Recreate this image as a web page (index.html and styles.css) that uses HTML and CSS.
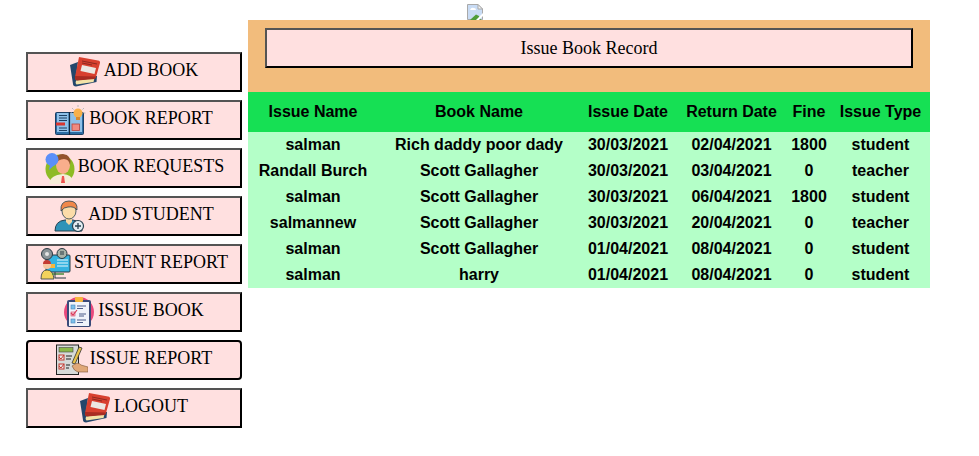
FILE: index.html
```html
<!DOCTYPE html>
<html lang="en">
<head>
    <meta charset="UTF-8">
    <meta name="viewport" content="width=device-width, initial-scale=1.0">
    <title>Issue Book Record</title>
    <link rel="stylesheet" href="styles.css">
</head>
<body>
    <svg class="sprites" width="0" height="0">
        <symbol id="book-icon" viewBox="0 0 32 32">
            <path d="M0 9 8 6 6 20 27 20 26.500 26 6 30.500Q3 30 3 28Z" fill="#24466b"/>
            <path d="M6 24.500 24.500 22 23.500 26 6.500 28.500Q5 26.500 6 24.500Z" fill="#f3e3a8"/>
            <path d="M9 1 28 4.500Q30.500 5 30 7L26 21Q25 23 23 22.500L7 24Q4.500 24 5 21Z" fill="#d8402f"/>
            <path d="M5 20 26 20.500 25 23 7 24.500Q4.500 24 5 20Z" fill="#a82c22"/>
            <path d="M12 9 26 12 24.500 18 10.500 15Z" fill="#ece8e2"/>
            <path d="M12 5 27 8M12 7 22 9" stroke="#8e2a20" stroke-width="1"/>
        </symbol>
    </svg>

    <div class="top-image">
        <!-- broken image placeholder -->
        <svg class="broken-img" width="16" height="16" viewBox="0 0 16 16">
            <path d="M.5.5H11L15.500 5V15.500H.5Z" fill="#c9dcf5" stroke="#a9a9a9"/>
            <path d="M11 .5V5H15.500Z" fill="#f4f4f4" stroke="#a9a9a9"/>
            <path d="M3 6q1-3 4-2 2 0 2 2Z" fill="#fff"/>
            <path d="M3 16 9 10.500 12 12 14 16Z" fill="#4f9d3a"/>
            <path d="M9 16 16 9V12L12 16Z" fill="#fff"/>
        </svg>
    </div>

    <div class="page">
        <div class="sidebar">
            <button class="nav-btn">
                <svg class="nav-icon" viewBox="0 0 32 32"><use href="#book-icon"/></svg>
                <span>ADD BOOK</span>
            </button>
            <button class="nav-btn">
                <svg class="nav-icon" viewBox="0 0 32 32">
                    <rect x=".5" y="8.500" width="28" height="22" rx="1" fill="#2b6ca3" stroke="#1d3f63"/>
                    <rect x="2" y="9" width="11.500" height="19" fill="#8fc0e8"/>
                    <rect x="15" y="9" width="12" height="19" fill="#8fc0e8"/>
                    <path d="M14.500 8V31" stroke="#12263d" stroke-width="1.200"/>
                    <path d="M4 11.500H12M4 14H12M4 16.500H12M4 24H12M4 26.500H12" stroke="#1d3f63"/>
                    <rect x="1" y="18.500" width="9" height="3" fill="#d8352f"/>
                    <rect x="17" y="20" width="7.500" height="6.500" fill="#f08a80" stroke="#b5423a" stroke-width=".8"/>
                    <circle cx="23" cy="9" r="4.500" fill="#f8b04a"/>
                    <rect x="21" y="13" width="4" height="3" fill="#d98a2e"/>
                    <path d="M23 1V3M17 4 18.500 5.500M29 4 27.500 5.500M15.500 9H17M29 9H30.500" stroke="#b8b8b8"/>
                </svg>
                <span>BOOK REPORT</span>
            </button>
            <button class="nav-btn">
                <svg class="nav-icon" viewBox="0 0 32 32">
                    <circle cx="16" cy="17" r="14.500" fill="#8dbb24"/>
                    <path d="M5 32Q6 23 19 22 28 23 28 28L22 32Z" fill="#f6ecd8"/>
                    <path d="M18 24H20L21 31H17Z" fill="#ef5350"/>
                    <ellipse cx="19" cy="13" rx="7" ry="9" fill="#f9ae8c"/>
                    <path d="M11 13Q10 2 19 2 28 3 26 13 25 7 20 7 14 7 11 13Z" fill="#94532e"/>
                    <circle cx="8" cy="7.500" r="6.500" fill="#5b8ff9"/>
                    <path d="M6 13 5 18 10.500 13Z" fill="#5b8ff9"/>
                </svg>
                <span>BOOK REQUESTS</span>
            </button>
            <button class="nav-btn">
                <svg class="nav-icon" viewBox="0 0 32 32">
                    <path d="M1 31Q1 21 11 20H19Q27 21 28 31Z" fill="#2f93b8" stroke="#26404f"/>
                    <path d="M12 18H18V22L15 25 12 22Z" fill="#f7d7a5"/>
                    <ellipse cx="15" cy="11" rx="7" ry="8" fill="#fbdca9" stroke="#26404f" stroke-width=".8"/>
                    <path d="M7 11Q6 1 15 1 24 1 23 10 20 6 14 7 10 7 7 11Z" fill="#f0884b" stroke="#26404f" stroke-width=".8"/>
                    <circle cx="24" cy="26" r="5.500" fill="#e4edf2" stroke="#26404f" stroke-width="1.200"/>
                    <path d="M24 23V29M21 26H27" stroke="#26404f" stroke-width="1.300"/>
                </svg>
                <span>ADD STUDENT</span>
            </button>
            <button class="nav-btn">
                <svg class="nav-icon" viewBox="0 0 32 32">
                    <rect x="6" y="7" width="24" height="17" rx="1" fill="#35b3e0" stroke="#2b3a44"/>
                    <path d="M17 12H28M17 15H28M17 18H28" stroke="#e9f7fc"/>
                    <rect x="10" y="16" width="5" height="4" fill="#f6b73c"/>
                    <circle cx="7" cy="6" r="5.500" fill="#8a9397" stroke="#2b3a44"/>
                    <circle cx="22" cy="5.500" r="5" fill="#a8b2a8" stroke="#2b3a44"/>
                    <path d="M20 4H24M20 6H24" stroke="#2b3a44"/>
                    <circle cx="7" cy="6" r="2" fill="#e4e4e4"/>
                    <circle cx="7" cy="17" r="4" fill="#f5c6a0"/>
                    <path d="M3 16Q3 12 7 12 11 12 11 16Z" fill="#c43b32"/>
                    <path d="M1 31Q1 22 7 22 13 22 14 31Z" fill="#f2d25c" stroke="#2b3a44" stroke-width=".8"/>
                    <path d="M12 26H24" stroke="#4a8a3c" stroke-width="1.500"/>
                    <path d="M15 24V30H26" stroke="#2b3a44" fill="none"/>
                </svg>
                <span>STUDENT REPORT</span>
            </button>
            <button class="nav-btn">
                <svg class="nav-icon" viewBox="0 0 32 32">
                    <circle cx="15" cy="16" r="15" fill="#e9497c"/>
                    <rect x="3" y="4" width="24" height="27" rx="2" fill="#3a4a78"/>
                    <rect x="5" y="6" width="20" height="24" fill="#f0f3fa"/>
                    <rect x="11" y="1" width="8" height="5" rx="1" fill="#f6b73c"/>
                    <rect x="7" y="9" width="4" height="4" fill="#7cc0ea" stroke="#4c82b8" stroke-width=".6"/>
                    <rect x="7" y="16" width="4" height="4" fill="#f6d5dc" stroke="#d83a5a" stroke-width=".6"/>
                    <rect x="7" y="23" width="4" height="4" fill="#7cc0ea" stroke="#4c82b8" stroke-width=".6"/>
                    <path d="M7 17 9 19 13 14" fill="none" stroke="#d83a5a" stroke-width="1.200"/>
                    <path d="M13 10H22M13 12.500H19M15 18H22M15 20H20M13 24H22M13 26.500H19" stroke="#4a5a88"/>
                </svg>
                <span>ISSUE BOOK</span>
            </button>
            <button class="nav-btn nav-btn-active">
                <svg class="nav-icon" viewBox="0 0 32 32">
                    <rect x=".5" y="1" width="22" height="29.500" fill="#d6dad8" stroke="#222"/>
                    <rect x="3" y="3.500" width="14" height="4.500" fill="#8cb84a" stroke="#444" stroke-width=".6"/>
                    <rect x="3" y="11" width="5" height="5" fill="#e8e8e8" stroke="#c43b32"/>
                    <rect x="3" y="20" width="5" height="5" fill="#e8e8e8" stroke="#c43b32"/>
                    <path d="M3 13 5 15 8 11M3 22 5 24 8 20" fill="none" stroke="#c43b32"/>
                    <path d="M10 12H16M10 15H15M10 21H14M10 24H13" stroke="#222"/>
                    <path d="M23 3 26 4 19 20 16 19Z" fill="#e8c34a" stroke="#333" stroke-width=".8"/>
                    <path d="M16 22Q22 17 25 21L32 23V28H22Q18 27 16 22Z" fill="#e0a878" stroke="#7a5236" stroke-width=".6"/>
                </svg>
                <span>ISSUE REPORT</span>
            </button>
            <button class="nav-btn">
                <svg class="nav-icon" viewBox="0 0 32 32"><use href="#book-icon"/></svg>
                <span>LOGOUT</span>
            </button>
        </div>

        <div class="main">
            <div class="title-bar">
                <div class="title-box">Issue Book Record</div>
            </div>
            <table class="record-table">
                <colgroup>
                    <col class="col-name">
                    <col class="col-book">
                    <col class="col-issue">
                    <col class="col-return">
                    <col class="col-fine">
                    <col class="col-type">
                </colgroup>
                <thead>
                    <tr>
                        <th>Issue Name</th>
                        <th>Book Name</th>
                        <th>Issue Date</th>
                        <th>Return Date</th>
                        <th>Fine</th>
                        <th>Issue Type</th>
                    </tr>
                </thead>
                <tbody>
                    <tr><td>salman</td><td>Rich daddy poor dady</td><td>30/03/2021</td><td>02/04/2021</td><td>1800</td><td>student</td></tr>
                    <tr><td>Randall Burch</td><td>Scott Gallagher</td><td>30/03/2021</td><td>03/04/2021</td><td>0</td><td>teacher</td></tr>
                    <tr><td>salman</td><td>Scott Gallagher</td><td>30/03/2021</td><td>06/04/2021</td><td>1800</td><td>student</td></tr>
                    <tr><td>salmannew</td><td>Scott Gallagher</td><td>30/03/2021</td><td>20/04/2021</td><td>0</td><td>teacher</td></tr>
                    <tr><td>salman</td><td>Scott Gallagher</td><td>01/04/2021</td><td>08/04/2021</td><td>0</td><td>student</td></tr>
                    <tr><td>salman</td><td>harry</td><td>01/04/2021</td><td>08/04/2021</td><td>0</td><td>student</td></tr>
                </tbody>
            </table>
        </div>
    </div>
</body>
</html>
```

FILE: styles.css
```css
* {
    box-sizing: border-box;
}

body {
    margin: 0;
    background-color: white;
    font-family: "Liberation Serif", "Times New Roman", serif;
    overflow: hidden;
}

.sprites {
    display: block;
    height: 0;
}

.top-image {
    height: 20px;
    padding: 4px 0 0 467px;
    overflow: hidden;
}

.broken-img {
    display: block;
}

.page {
    display: flex;
    align-items: flex-start;
    gap: 6px;
    padding-left: 26px;
}

.sidebar {
    width: 216px;
    padding-top: 32px;
    display: flex;
    flex-direction: column;
    gap: 8px;
}

.nav-btn {
    height: 40px;
    display: flex;
    align-items: center;
    justify-content: center;
    gap: 2px;
    padding: 0;
    background-color: #ffe0e0;
    border: 2px outset black;
    color: black;
    font-family: inherit;
    font-size: 18px;
}

.nav-btn span {
    padding-bottom: 4px;
}

.nav-btn-active {
    border: 2px solid black;
    border-radius: 4px;
}

.nav-icon {
    width: 32px;
    height: 32px;
    flex: none;
}

.main {
    width: 682px;
}

.title-bar {
    height: 72px;
    padding: 8px 17px 0;
    background-color: #f2bc7c;
}

.title-box {
    height: 40px;
    display: flex;
    align-items: center;
    justify-content: center;
    background-color: #ffe0e0;
    border: 2px outset black;
    font-size: 18px;
}

.record-table {
    width: 682px;
    table-layout: fixed;
    border-collapse: collapse;
    font-family: "Liberation Sans", Arial, sans-serif;
    font-size: 16px;
    font-weight: bold;
    text-align: center;
}

.col-name { width: 130px; }
.col-book { width: 202px; }
.col-issue { width: 96px; }
.col-return { width: 111px; }
.col-fine { width: 44px; }
.col-type { width: 99px; }

.record-table th {
    height: 40px;
    padding: 0;
    background-color: #16e054;
}

.record-table td {
    height: 26px;
    padding: 0;
    background-color: #b4ffc8;
}
```
